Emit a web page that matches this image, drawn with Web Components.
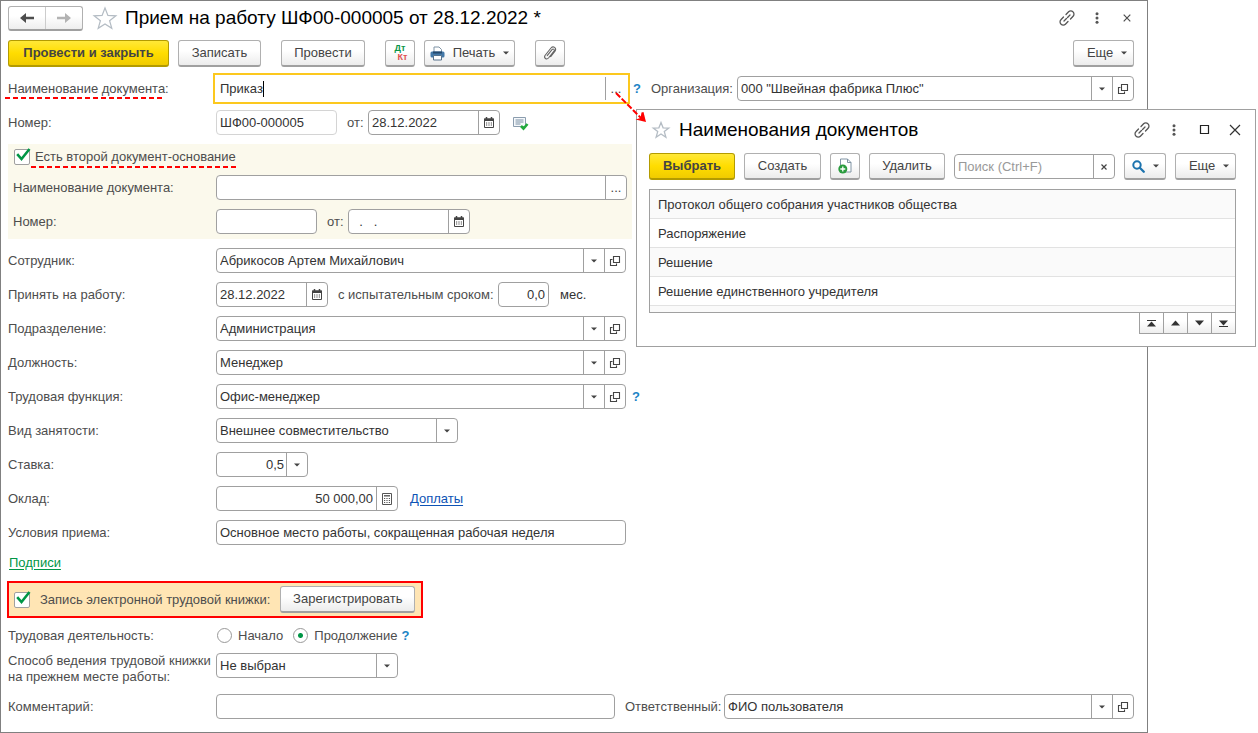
<!DOCTYPE html>
<html lang="ru">
<head>
<meta charset="utf-8">
<title>Прием на работу</title>
<style>
  :root {
    --font: "Liberation Sans", Arial, sans-serif;
    --text: #333;
    --label: #4d4d4d;
    --line: #a0a0a0;
    --green: #009646;
    --red: #f00;
  }
  body { margin: 0; background: #fff; font: 13px/16px var(--font); color: var(--text); }
</style>
</head>
<body>
<hire-page></hire-page>

<script>
const ICONS = {
  back: [16, 12, '<path d="M1 6l6-5v3.700h8v2.600H7V11z" fill="#4d4d4d"/>'],
  forward: [16, 12, '<path d="M15 6L9 1v3.700H1v2.600h8V11z" fill="#b3b3b3"/>'],
  star: [24, 22, '<path d="M12 1l2.900 7.400 8 .4-6.300 4.900 2.200 7.600L12 16.900l-6.800 4.400 2.200-7.600L1.100 8.800l8-.4z" fill="#fff" stroke="#b4bcc4" stroke-width="1.200"/>'],
  starSmall: [18, 18, '<path d="M9 1.500l2.100 5.300 5.700.3-4.500 3.500 1.600 5.600L9 13l-4.900 3.200 1.600-5.600L1.200 7.100l5.700-.3z" fill="#fff" stroke="#b4bcc4" stroke-width="1.300"/>'],
  link: [16, 16, '<g fill="none" stroke="#555" stroke-width="1.300" stroke-linecap="round"><path d="M7 4.500l2.600-2.700a3 3 0 0 1 4.300 0 3 3 0 0 1 .2 4.400L11.500 9"/><path d="M9 11.500l-2.600 2.700a3 3 0 0 1-4.300 0 3 3 0 0 1-.2-4.400L4.500 7"/><path d="M5 11l6-6" stroke-dasharray="3.500 1.500"/></g>'],
  dots: [4, 12, '<g fill="#555"><circle cx="2" cy="1.800" r="1.500"/><circle cx="2" cy="6" r="1.500"/><circle cx="2" cy="10.200" r="1.500"/></g>'],
  close: [8, 8, '<path d="M.7.7l6.600 6.600M7.300.7L.7 7.300" stroke="#4d4d4d" stroke-width="1.200"/>'],
  closeBig: [12, 12, '<path d="M1 1l10 10M11 1L1 11" stroke="#333" stroke-width="1.200"/>'],
  clear: [6, 6, '<path d="M.5.5l5 5M5.500.5l-5 5" stroke="#444" stroke-width="1.200"/>'],
  square: [10, 10, '<path d="M.5.5h8v8h-8z" fill="none" stroke="#222" stroke-width="1.200"/>'],
  caret: [6, 4, '<path d="M0 .5h6L3 3.500z" fill="#444"/>'],
  open: [10, 10, '<g fill="none" stroke="#444" stroke-width="1.100"><path d="M3.500.5h6v6h-6z"/><path d="M2.500 3.500h-2v6h6v-2"/></g>'],
  calendar: [10, 11, '<path d="M.5 2h9v8.500h-9z" fill="#fff" stroke="#444"/><path d="M0 1.500h10V4H0z" fill="#444"/><path d="M2.500 0v2M7.500 0v2" stroke="#444" stroke-width="1.500"/><path d="M2 6h1.200M4.400 6h1.200M6.800 6H8M2 8h1.200M4.400 8h1.200M6.800 8H8" stroke="#444"/>'],
  calc: [10, 12, '<path d="M.5.5h9v11h-9z" fill="#fff" stroke="#555"/><path d="M2 2.800h6" stroke="#555" stroke-width="1.400"/><path d="M2 5.500h1.200M4.400 5.500h1.200M6.800 5.500H8M2 7.500h1.200M4.400 7.500h1.200M6.800 7.500H8M2 9.500h1.200M4.400 9.500h1.200M6.800 9.500H8" stroke="#555"/>'],
  printer: [15, 15, '<path d="M4 6V1h5l2.500 2.500V6" fill="#fff" stroke="#7f93a5"/><rect x=".5" y="5.500" width="14" height="6" rx="1.500" fill="#4479a8"/><path d="M3 5.500h9v2H3z" fill="#24496d"/><path d="M3.500 9.500h8v4.500h-8z" fill="#fff" stroke="#58738c"/>'],
  clip: [14, 16, '<path d="M4 10.800l5-6.100c1.300-1.500 3.100 0 2 1.500L5.500 13c-1.900 2.100-5 .1-3.500-2.500L8 3c2.300-2.600 6 0 4 3.200L7.500 12" fill="none" stroke="#666" stroke-width="1.100"/>'],
  search: [13, 13, '<circle cx="5" cy="5" r="3.700" fill="none" stroke="#1c73ae" stroke-width="2"/><path d="M7.800 7.800l4 4" stroke="#1c73ae" stroke-width="2.300" stroke-linecap="round"/>'],
  copy: [14, 16, '<path d="M2.500 1h7l3.500 3.500V14H2.500z" fill="#fff" stroke="#8094a4"/><path d="M9.500 1v3.500H13" fill="none" stroke="#8094a4"/><circle cx="4.800" cy="11" r="4.500" fill="#2a9c3e"/><path d="M4.800 8.500v5M2.300 11h5" stroke="#fff" stroke-width="1.300"/>'],
  posted: [15, 14, '<path d="M.5 1.500h12v9H.5z" fill="#f5f8fb" stroke="#8b9dae"/><path d="M2.500 4h8M2.500 6h8M2.500 8h5" stroke="#7b90a4"/><path d="M8 10l2.500 2.500 4-4.500" fill="none" stroke="#22aa3c" stroke-width="2.600"/>'],
  tick: [15, 14, '<path d="M1.200 5.200L5.500 10 13.500 0" fill="none" stroke="#009646" stroke-width="2.600"/>'],
  first: [9, 7, '<path d="M0 .5h9" stroke="#333"/><path d="M4.500 1.500L9 6.500H0z" fill="#333"/>'],
  up: [9, 6, '<path d="M4.500.5L9 5.500H0z" fill="#333"/>'],
  down: [9, 6, '<path d="M4.500 5.500L9 .5H0z" fill="#333"/>'],
  last: [9, 7, '<path d="M0 6.500h9" stroke="#333"/><path d="M4.500 5.500L9 .5H0z" fill="#333"/>'],
};

const define = (name, render) => customElements.define(name, class extends HTMLElement {
  connectedCallback() {
    if (this.shadowRoot) return;
    const root = this.attachShadow({ mode: 'open' });
    root.innerHTML = '<style>*{box-sizing:border-box}:host{box-sizing:border-box}</style>' + render(this);
  }
});

define('ui-icon', el => {
  const [w, h, body] = ICONS[el.getAttribute('name')];
  return `<style>:host{display:inline-flex;flex:none}svg{display:block;overflow:visible}</style>
  <svg width="${w}" height="${h}" viewBox="0 0 ${w} ${h}" aria-hidden="true">${body}</svg>`;
});

define('ui-button', el => `<style>
  :host { display: block; flex: none; width: var(--w, auto); }
  button { display: flex; align-items: center; justify-content: center; gap: 8px; width: 100%; height: 27px;
    padding: 0 1px; font: inherit; font-size: 13px; color: #444; border: 1px solid #b0b0b0; border-bottom: 2px solid #a0a0a0;
    border-radius: 3px; background: linear-gradient(#fff 40%, #ececec); white-space: nowrap; }
  :host([primary]) button { font-weight: bold; border-color: #b39b00; background: linear-gradient(#ffe838, #ffdd00 50%, #f0cb00); }
  </style><button type="button" aria-label="${el.getAttribute('hint') || el.textContent.trim()}"><slot></slot></button>`);

define('icon-button', el => `<style>
  :host { display: block; flex: none; }
  button { display: flex; align-items: center; justify-content: center; width: var(--w, 30px); height: var(--h, 24px); padding: 0; border: 0; background: none; }
  </style><button type="button" aria-label="${el.getAttribute('hint')}"><ui-icon name="${el.getAttribute('icon')}"></ui-icon></button>`);

define('help-mark', () => `<style>
  :host { display: block; flex: none; }
  button { display: block; padding: 0; border: 0; background: none; font: bold 13px/16px var(--font); color: #1c84c6; }
  </style><button type="button" aria-label="Справка">?</button>`);

/* Labelled box with an input or a select and small tool cells on its right. */
define('form-field', el => {
  const a = n => el.getAttribute(n) || '';
  const value = a('value').replace(/"/g, '&quot;');
  const cells = a('cells').split(' ').filter(Boolean);
  const select = cells.includes('caret');
  const hints = { open: 'Открыть', calendar: 'Календарь', calc: 'Калькулятор', clear: 'Очистить', more: 'Выбрать' };
  const name = a('label') ? '' : `aria-label="${a('hint')}"`;
  const control = select
    ? `<select id="c" ${name}><option>${value}</option></select><span class="cell mark"><ui-icon name="caret"></ui-icon></span>`
    : `<input id="c" type="text" ${name} value="${value}" placeholder="${a('placeholder')}">`;
  const rest = cells.filter(c => c !== 'caret').map(c =>
    `<button class="cell" type="button" aria-label="${hints[c]}">${c === 'more' ? '...' : `<ui-icon name="${c}"></ui-icon>`}</button>`).join('');
  return `<style>
  :host { display: flex; align-items: center; flex: none; }
  :host([fill]) { flex: 1; min-width: 0; }
  :host([tall]) { align-items: flex-start; height: 32px; }
  label { flex: none; width: var(--lw, auto); color: var(--label); white-space: pre-line; }
  .mark-line { position: relative; white-space: nowrap; }
  .mark-line::after { content: ""; position: absolute; left: -3px; right: 5px; bottom: -3px; height: 2px;
    background: repeating-linear-gradient(90deg, var(--red) 0 5px, transparent 5px 8px); }
  .box { position: relative; display: flex; flex: none; width: var(--box); height: 25px; border: 1px solid var(--line);
    border-radius: 4px; background: #fff; }
  :host([fill]) .box { flex: 1; min-width: 0; }
  :host([soft]) .box { border-color: #d4d4d4; }
  :host([active]) .box { border-color: transparent; outline: 2px solid #fcc81e; outline-offset: 1px; border-radius: 0; }
  input, select { flex: 1; width: 0; min-width: 0; height: 23px; margin: 0; padding: 0 3px; border: 0; outline: 0; background: none;
    font: inherit; color: var(--text); appearance: none; text-align: var(--align, left); text-align-last: var(--align, left); }
  select { padding-right: 23px; margin-right: -21px; }
  input::placeholder { color: #999; opacity: 1; }
  .cell { display: flex; align-items: center; justify-content: center; flex: none; width: 21px; height: 23px; padding: 0; border: 0;
    border-left: 1px solid var(--line); background: none; font: inherit; color: #444; }
  .mark { pointer-events: none; }
  .cursor { position: absolute; left: 46px; top: 4px; width: 1px; height: 16px; background: #000; }
  </style>
  ${a('label') ? `<label for="c"><span class="${el.hasAttribute('underlined') ? 'mark-line' : ''}">${a('label')}</span></label>` : ''}
  <div class="box">${control}${rest}${el.hasAttribute('active') ? '<span class="cursor"></span>' : ''}</div>`;
});

define('check-field', el => `<style>
  :host { display: flex; }
  label { display: flex; align-items: center; gap: var(--gap, 5px); height: 16px; white-space: nowrap; }
  .tick { display: grid; width: 16px; height: 16px; }
  .tick > * { grid-area: 1 / 1; }
  input { appearance: none; width: 16px; height: 16px; margin: 0; border: 1px solid var(--line); border-radius: 2px; background: #fff; }
  ui-icon { margin: 0 0 0 2px; pointer-events: none; display: none; }
  input:checked + ui-icon { display: block; }
  .text { position: relative; }
  :host([underlined]) .text::after { content: ""; position: absolute; left: -4px; right: 0; bottom: -3px; height: 2px;
    background: repeating-linear-gradient(90deg, var(--red) 0 5px, transparent 5px 8px); }
  </style><label><span class="tick"><input type="checkbox" checked><ui-icon name="tick"></ui-icon></span><span class="text">${el.getAttribute('label')}</span></label>`);

define('activity-radios', () => `<style>
  :host { display: block; color: var(--label); }
  fieldset { display: flex; align-items: center; margin: 0; padding: 0; border: 0; height: 17px; }
  .title { width: 208px; }
  label { display: flex; align-items: center; gap: 6px; margin: 0 9px 0 1px; }
  input { appearance: none; width: 15px; height: 15px; margin: 0; border: 1px solid #999; border-radius: 50%; background: #fff; }
  input:checked { background: radial-gradient(circle, var(--green) 0 2px, #fff 3px); }
  label:last-of-type { margin-right: 4px; }
  </style><fieldset aria-labelledby="t"><span class="title" id="t">Трудовая деятельность:</span>
  <label><input type="radio" name="act">Начало</label><label><input type="radio" name="act" checked>Продолжение</label><help-mark></help-mark></fieldset>`);

define('name-picker', () => `<style>
  :host { display: block; border: 1px solid var(--line); background: #fff; padding: 8px 19px 12px 12px; }
  header { display: flex; align-items: center; height: 24px; margin: 0 -14px 0 3px; }
  h2 { flex: 1; margin: 0 0 0 9px; font: 19px/22px var(--font); color: #000; }
  .bar { display: flex; gap: 9px; margin: 11px 0 9px; align-items: center; }
  .list { height: 124px; overflow: hidden; border: 1px solid var(--line); }
  table { width: 100%; border-collapse: separate; border-spacing: 0; }
  td { height: 29px; padding: 1px 8px 0; border-bottom: 1px solid #e2e2e2; }
  tr:nth-child(odd) { background: #fafafa; }
  .pager { display: flex; justify-content: flex-end; }
  .pager > span { border: 1px solid var(--line); border-top: 0; margin-left: -1px; background: linear-gradient(#fff 40%, #eee); --w: 23px; --h: 20px; height: 21px; }
  .pointer { position: absolute; left: -22px; top: -19px; pointer-events: none; }
  </style>
  <header><ui-icon name="starSmall"></ui-icon><h2>Наименования документов</h2>
    <icon-button icon="link" hint="Ссылка" style="--w:32px"></icon-button><icon-button icon="dots" hint="Меню" style="--w:32px"></icon-button>
    <icon-button icon="square" hint="Развернуть"></icon-button><icon-button icon="closeBig" hint="Закрыть"></icon-button></header>
  <div class="bar">
    <ui-button primary style="--w:86px">Выбрать</ui-button>
    <ui-button style="--w:77px">Создать</ui-button>
    <ui-button style="--w:30px" hint="Скопировать"><ui-icon name="copy"></ui-icon></ui-button>
    <ui-button style="--w:76px">Удалить</ui-button>
    <form-field fill hint="Поиск" placeholder="Поиск (Ctrl+F)" cells="clear"></form-field>
    <ui-button style="--w:42px" hint="Найти"><ui-icon name="search"></ui-icon><ui-icon name="caret"></ui-icon></ui-button>
    <ui-button style="--w:61px">&nbsp; Еще<ui-icon name="caret"></ui-icon></ui-button>
  </div>
  <div class="list"><table><tbody>
    <tr><td>Протокол общего собрания участников общества</td></tr>
    <tr><td>Распоряжение</td></tr><tr><td>Решение</td></tr><tr><td>Решение единственного учредителя</td></tr><tr><td></td></tr>
  </tbody></table></div>
  <div class="pager"><span><icon-button icon="first" hint="В начало"></icon-button></span><span><icon-button icon="up" hint="Вверх"></icon-button></span><span><icon-button icon="down" hint="Вниз"></icon-button></span><span><icon-button icon="last" hint="В конец"></icon-button></span></div>
  <svg class="pointer" width="32" height="32" viewBox="0 0 32 32" aria-hidden="true"><path d="M1 2l26 26" stroke="#f00" stroke-width="2" stroke-dasharray="6 2" fill="none"/><path d="M31 31l-10.500-2.500 5-1.500 1-5.500 2-.5z" fill="#f00"/></svg>`);

define('hire-page', () => `<style>
  :host { display: block; position: relative; }
  main { margin-right: 110px; padding: 5px 13px 13px 7px; border: 1px solid #808080; }
  header { display: flex; align-items: center; height: 24px; margin-right: -8px; }
  .nav { display: flex; border: 1px solid #b0b0b0; border-bottom: 2px solid #a0a0a0; border-radius: 3px; height: 25px; background: linear-gradient(#fff 40%, #eee); --w: 36px; --h: 22px; }
  .nav icon-button + icon-button { border-left: 1px solid #ccc; }
  .star { margin: 0 8px 0 10px; }
  h1 { flex: 1; margin: 0; font: 19px/22px var(--font); color: #000; }
  .bar { display: flex; align-items: center; margin: 10px 0 9px; }
  form { display: flex; flex-direction: column; gap: 9px; }
  .row { display: flex; align-items: center; }
  .gap { margin-left: 10px; }
  .unit { margin-left: 11px; }
  .basis { display: flex; flex-direction: column; gap: 9px; width: 624px; padding: 5px; background: #fbf9ec; color: var(--label); }
  .basis check-field { margin: 0 0 1px 1px; }
  a { color: #0d53b5; margin-left: 12px; text-underline-offset: 2px; }
  a.sign { color: var(--green); margin: 0 0 0 1px; line-height: 18px; align-self: flex-start; }
  .record { display: flex; align-items: center; align-self: flex-start; gap: 10px; margin-left: -1px; height: 37px; padding: 0 6px 0 5px; border: 2px solid var(--red); background: #ffe5b4; color: var(--label); }
  .dtkt { display: grid; font: bold 9px/9px var(--font); color: #0a9648; }
  .dtkt b + b { color: #e05050; padding-left: 5px; }
  name-picker { position: absolute; top: 109px; right: 2px; width: 620px; }
  </style>
  <main>
    <header>
      <div class="nav"><icon-button icon="back" hint="Назад"></icon-button><icon-button icon="forward" hint="Вперед"></icon-button></div>
      <ui-icon class="star" name="star"></ui-icon>
      <h1>Прием на работу ШФ00-000005 от 28.12.2022 *</h1>
      <icon-button icon="link" hint="Ссылка"></icon-button><icon-button icon="dots" hint="Меню"></icon-button><icon-button icon="close" hint="Закрыть"></icon-button>
    </header>
    <div class="bar">
      <ui-button primary style="--w:161px">Провести и закрыть</ui-button>
      <ui-button style="--w:83px;margin-left:9px">Записать</ui-button>
      <ui-button style="--w:84px;margin-left:20px">Провести</ui-button>
      <ui-button style="--w:30px;margin-left:20px" hint="Дт Кт"><span class="dtkt"><b>Дт</b><b>Кт</b></span></ui-button>
      <ui-button style="--w:91px;margin-left:9px"><ui-icon name="printer"></ui-icon>Печать<ui-icon name="caret"></ui-icon></ui-button>
      <ui-button style="--w:30px;margin-left:20px" hint="Файлы"><ui-icon name="clip"></ui-icon></ui-button>
      <ui-button style="--w:61px;margin-left:auto">&nbsp; Еще<ui-icon name="caret"></ui-icon></ui-button>
    </div>
    <form>
      <div class="row">
        <form-field active underlined label="Наименование документа:" value="Приказ" cells="more" style="--lw:208px;--box:411px"></form-field>
        <help-mark style="margin-left:6px"></help-mark>
        <form-field class="gap" fill label="Организация:" value='000 "Швейная фабрика Плюс"' cells="caret open" style="--lw:86px"></form-field>
      </div>
      <div class="row">
        <form-field soft label="Номер:" value="ШФ00-000005" style="--lw:208px;--box:121px"></form-field>
        <form-field class="gap" label="от:" value="28.12.2022" cells="calendar" style="--lw:21px;--box:132px"></form-field>
        <ui-icon name="posted" style="margin-left:13px"></ui-icon>
      </div>
      <div class="basis">
        <check-field underlined label="Есть второй документ-основание"></check-field>
        <form-field label="Наименование документа:" cells="more" style="--lw:203px;--box:411px"></form-field>
        <div class="row">
          <form-field label="Номер:" style="--lw:203px;--box:101px"></form-field>
          <form-field class="gap" label="от:" value="  .   ." cells="calendar" style="--lw:21px;--box:122px"></form-field>
        </div>
      </div>
      <form-field label="Сотрудник:" value="Абрикосов Артем Михайлович" cells="caret open" style="--lw:208px;--box:410px"></form-field>
      <div class="row">
        <form-field label="Принять на работу:" value="28.12.2022" cells="calendar" style="--lw:208px;--box:112px"></form-field>
        <form-field class="gap" label="с испытательным сроком:" value="0,0" style="--lw:160px;--box:51px;--align:right"></form-field>
        <span class="unit">мес.</span>
      </div>
      <form-field label="Подразделение:" value="Администрация" cells="caret open" style="--lw:208px;--box:410px"></form-field>
      <form-field label="Должность:" value="Менеджер" cells="caret open" style="--lw:208px;--box:410px"></form-field>
      <div class="row">
        <form-field label="Трудовая функция:" value="Офис-менеджер" cells="caret open" style="--lw:208px;--box:410px"></form-field>
        <help-mark style="margin-left:6px"></help-mark>
      </div>
      <form-field label="Вид занятости:" value="Внешнее совместительство" cells="caret" style="--lw:208px;--box:242px"></form-field>
      <form-field label="Ставка:" value="0,5" cells="caret" style="--lw:208px;--box:92px;--align:right"></form-field>
      <div class="row">
        <form-field label="Оклад:" value="50 000,00" cells="calc" style="--lw:208px;--box:182px;--align:right"></form-field>
        <a href="#pay">Доплаты</a>
      </div>
      <form-field label="Условия приема:" value="Основное место работы, сокращенная рабочая неделя" style="--lw:208px;--box:410px"></form-field>
      <a class="sign" href="#sign">Подписи</a>
      <div class="record">
        <check-field label="Запись электронной трудовой книжки:" style="--gap:10px"></check-field>
        <ui-button style="--w:135px">Зарегистрировать</ui-button>
      </div>
      <activity-radios></activity-radios>
      <form-field tall label="Способ ведения трудовой книжки&#10;на прежнем месте работы:" value="Не выбран" cells="caret" style="--lw:208px;--box:182px"></form-field>
      <div class="row">
        <form-field label="Комментарий:" style="--lw:208px;--box:399px"></form-field>
        <form-field class="gap" fill label="Ответственный:" value="ФИО пользователя" cells="caret open" style="--lw:99px"></form-field>
      </div>
    </form>
  </main>
  <name-picker></name-picker>`);
</script>
</body>
</html>
